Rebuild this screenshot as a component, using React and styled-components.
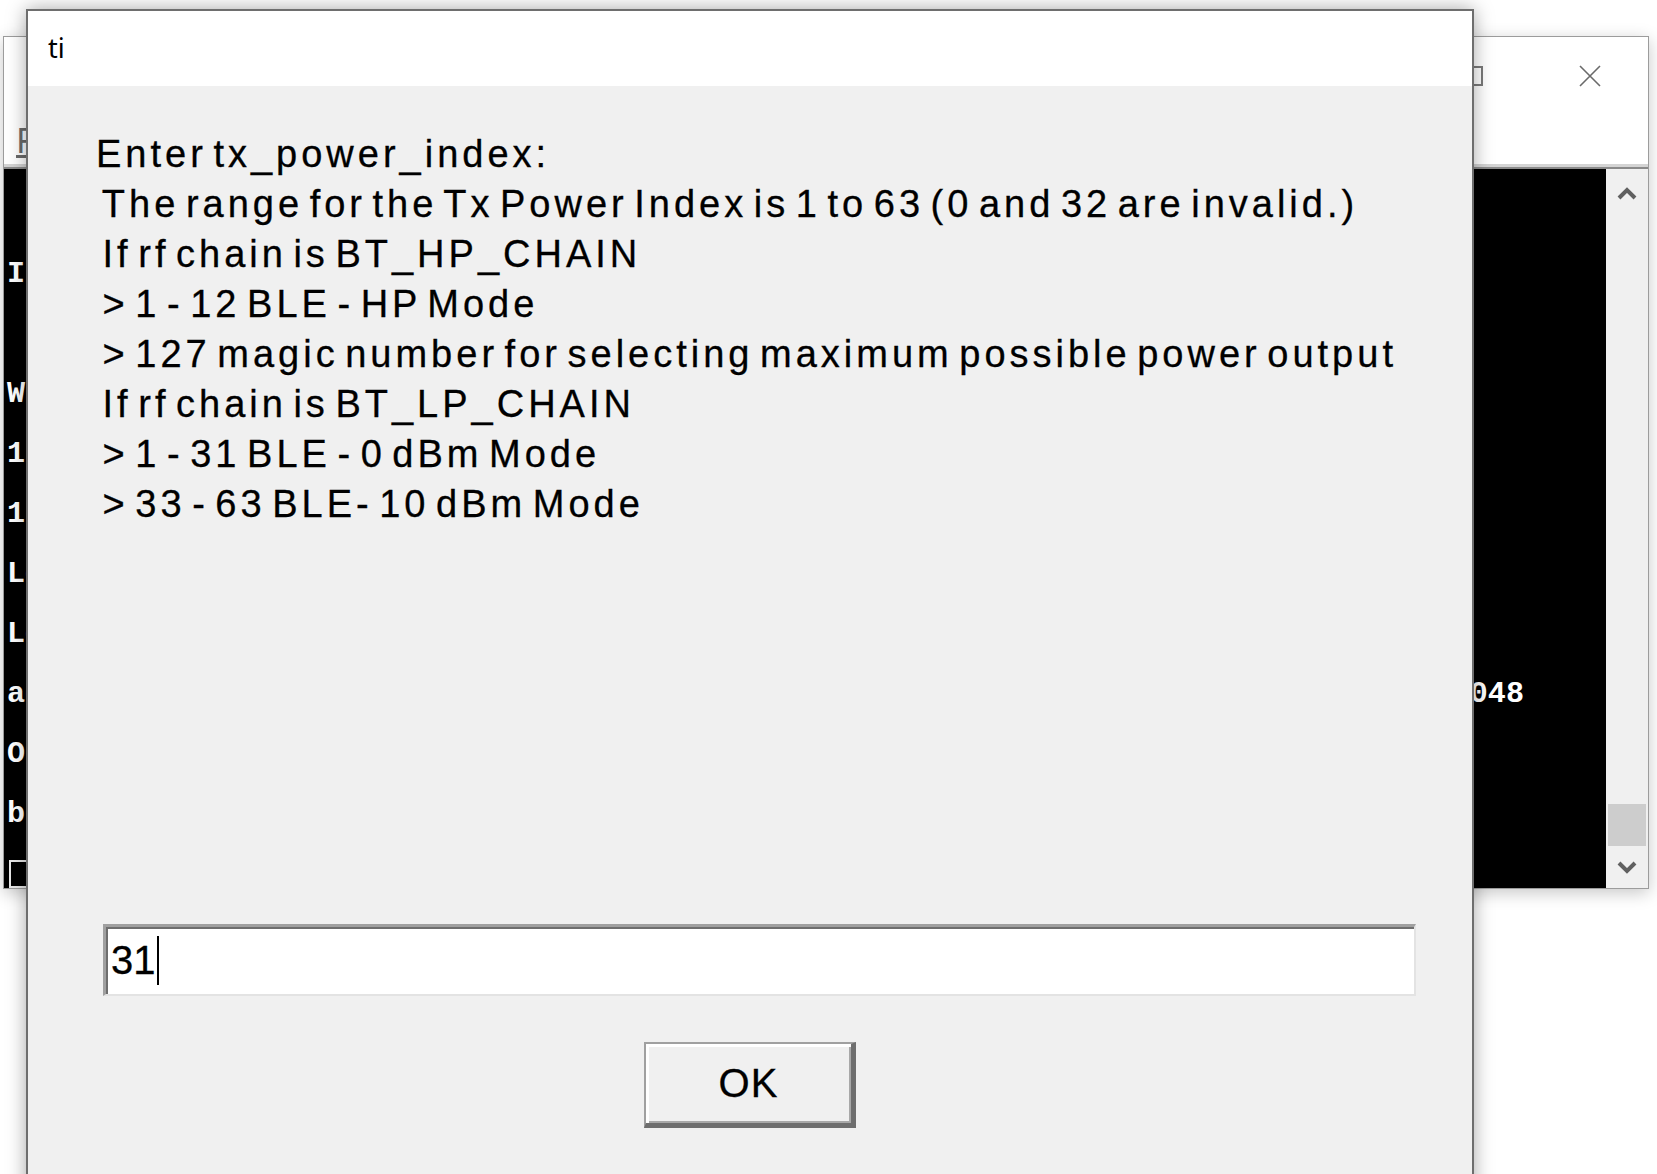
import React from "react";
import styled, { createGlobalStyle } from "styled-components";

const GlobalStyle = createGlobalStyle`
    html, body {
        margin: 0;
        padding: 0;
        background: #ffffff;
        overflow: hidden;
    }
`;

// console output behind the dialog, only the edges of it show
const heapLine = "addr :".padEnd(78) + "0x8048";
const consoleRows = [
    "",
    "Init",
    "",
    "Wait",
    "1.",
    "1.",
    "Load",
    "Load",
    heapLine,
    "OK",
    "ble",
];

const Desktop = styled.div`
    position: relative;
    width: 1657px;
    height: 1174px;
    overflow: hidden;
    background: #ffffff;
`;

const BackWindow = styled.div`
    position: absolute;
    left: 3px;
    top: 36px;
    width: 1646px;
    height: 853px;
    box-sizing: border-box;
    border: 1px solid #9c9c9c;
    background: #ffffff;
    display: flex;
    flex-direction: column;
    box-shadow: 0 4px 16px rgba(0, 0, 0, 0.22);
`;

const TitleBar = styled.div`
    flex-shrink: 0;
    height: 78px;
    display: flex;
    justify-content: flex-end;
`;

const CaptionButton = styled.div`
    width: 117px;
    height: 100%;
    display: flex;
    align-items: center;
    justify-content: center;
`;

const MenuBar = styled.div`
    flex-shrink: 0;
    height: 49px;
    display: flex;
    align-items: center;
    padding-left: 12px;
    font-family: "Noto Sans", "Liberation Sans", sans-serif;
    font-size: 34px;
    color: #6a6a6a;
    span {
        text-decoration: underline;
    }
`;

const ConsoleBody = styled.div`
    flex: 1;
    min-height: 0;
    display: flex;
    border-top: 3px solid #d4d4d4;
    box-shadow: inset 0 3px 0 #8a8a8a, inset 0 5px 0 #3c3c3c;
    padding-top: 2px;
    background: #000000;
`;

const ConsoleText = styled.div`
    flex: 1;
    background: #000000;
    color: #ffffff;
    font-family: "Liberation Mono", "DejaVu Sans Mono", monospace;
    font-weight: bold;
    font-size: 30.1px;
    line-height: 60px;
    white-space: pre;
    overflow: hidden;
    padding: 15px 0 0 3px;
`;

const ConsoleRow = styled.div`
    height: 60px;
`;

const CursorBox = styled.span`
    display: inline-block;
    width: 16px;
    height: 24px;
    border: 2px solid #e8e8e8;
    vertical-align: middle;
    margin-left: 2px;
`;

const ScrollBar = styled.div`
    width: 42px;
    background: #f0f0f0;
    display: flex;
    flex-direction: column;
`;

const ScrollArrow = styled.div`
    flex-shrink: 0;
    height: ${(p) => p.h}px;
    display: flex;
    align-items: center;
    justify-content: center;
`;

const ScrollTrack = styled.div`
    flex: 1;
    display: flex;
    flex-direction: column;
    justify-content: flex-end;
    padding: 0 2px;
`;

const ScrollThumb = styled.div`
    height: 42px;
    background: #cdcdcd;
`;

const Dialog = styled.div`
    position: absolute;
    left: 26px;
    top: 9px;
    width: 1448px;
    height: 1200px;
    box-sizing: border-box;
    border: 2px solid #6e6e6e;
    background: #f0f0f0;
    display: flex;
    flex-direction: column;
    box-shadow: 0 0 18px rgba(0, 0, 0, 0.35);
`;

const DialogTitle = styled.div`
    flex-shrink: 0;
    height: 75px;
    background: #ffffff;
    display: flex;
    align-items: center;
    padding-left: 20px;
    padding-bottom: 2px;
    box-sizing: border-box;
    font-family: "Noto Sans", "Open Sans", sans-serif;
    font-size: 27px;
    color: #000000;
`;

const DialogBody = styled.div`
    flex: 1;
    display: flex;
    flex-direction: column;
    padding-top: 43px;
`;

const Prompt = styled.div`
    padding-left: 68px;
    font-family: "Liberation Sans", Arial, sans-serif;
    font-size: 38px;
    letter-spacing: 4px;
    word-spacing: -8px;
    line-height: 50px;
    color: #000000;
    -webkit-text-stroke: 0.3px #000000;
    white-space: pre;
`;

const Field = styled.div`
    margin: 395px 0 0 75px;
    width: 1313px;
    height: 72px;
    box-sizing: border-box;
    background: #ffffff;
    border-style: solid;
    border-width: 3px 2px 2px 3px;
    border-color: #a0a0a0 #e3e3e3 #e3e3e3 #a0a0a0;
    box-shadow: inset 2px 2px 0 #6e6e6e;
    display: flex;
    align-items: center;
    padding-left: 5px;
    font-family: "Liberation Sans", Arial, sans-serif;
    font-size: 40px;
    color: #000000;
    -webkit-text-stroke: 0.3px #000000;
`;

const Caret = styled.span`
    display: inline-block;
    width: 2px;
    height: 49px;
    background: #000000;
    margin-left: 1px;
`;

const OkButton = styled.button`
    align-self: center;
    margin-top: 46px;
    width: 212px;
    height: 86px;
    box-sizing: border-box;
    background: #f0f0f0;
    border-style: solid;
    border-width: 2px 5px 5px 2px;
    border-color: #a0a0a0 #6e6e6e #6e6e6e #a0a0a0;
    box-shadow: inset 3px 3px 0 #ffffff, inset -2px -2px 0 #a8a8a8;
    font-family: "Liberation Sans", Arial, sans-serif;
    font-size: 40px;
    letter-spacing: 1px;
    color: #000000;
    -webkit-text-stroke: 0.3px #000000;
    padding: 0;
    cursor: default;
`;

const promptText = [
    "Enter tx_power_index:",
    " The range for the Tx Power Index is 1 to 63 (0 and 32 are invalid.)",
    " If rf chain is BT_HP_CHAIN",
    " > 1 - 12 BLE - HP Mode",
    " > 127 magic number for selecting maximum possible power output",
    " If rf chain is BT_LP_CHAIN",
    " > 1 - 31 BLE - 0 dBm Mode",
    " > 33 - 63 BLE- 10 dBm Mode",
];

const Chevron = ({ down }) => (
    <svg width="22" height="16" viewBox="0 0 22 16">
        <polyline
            points={down ? "3,4 11,12 19,4" : "3,12 11,4 19,12"}
            fill="none"
            stroke="#606060"
            strokeWidth="4"
        />
    </svg>
);

const App = () => {
    return (
        <Desktop>
            <GlobalStyle />
            <BackWindow>
                <TitleBar>
                    <CaptionButton>
                        <svg width="20" height="20" viewBox="0 0 20 20">
                            <line x1="0" y1="10" x2="20" y2="10" stroke="#777" strokeWidth="1.5" />
                        </svg>
                    </CaptionButton>
                    <CaptionButton>
                        <svg width="20" height="20" viewBox="0 0 20 20">
                            <rect x="1" y="1" width="18" height="18" fill="none" stroke="#7a7a7a" strokeWidth="2" />
                        </svg>
                    </CaptionButton>
                    <CaptionButton>
                        <svg width="22" height="22" viewBox="0 0 22 22">
                            <path d="M1 1 L21 21 M21 1 L1 21" stroke="#6a6a6a" strokeWidth="1.6" />
                        </svg>
                    </CaptionButton>
                </TitleBar>
                <MenuBar>
                    <span>File</span>
                </MenuBar>
                <ConsoleBody>
                    <ConsoleText>
                        {consoleRows.map((row, i) => (
                            <ConsoleRow key={i}>{row}</ConsoleRow>
                        ))}
                        <ConsoleRow>
                            <CursorBox />
                        </ConsoleRow>
                    </ConsoleText>
                    <ScrollBar>
                        <ScrollArrow h={50}>
                            <Chevron />
                        </ScrollArrow>
                        <ScrollTrack>
                            <ScrollThumb />
                        </ScrollTrack>
                        <ScrollArrow h={42}>
                            <Chevron down />
                        </ScrollArrow>
                    </ScrollBar>
                </ConsoleBody>
            </BackWindow>

            <Dialog>
                <DialogTitle>ti</DialogTitle>
                <DialogBody>
                    <Prompt>
                        {promptText.map((line, i) => (
                            <div key={i}>{line}</div>
                        ))}
                    </Prompt>
                    <Field>
                        31
                        <Caret />
                    </Field>
                    <OkButton>OK</OkButton>
                </DialogBody>
            </Dialog>
        </Desktop>
    );
};

export default App;
